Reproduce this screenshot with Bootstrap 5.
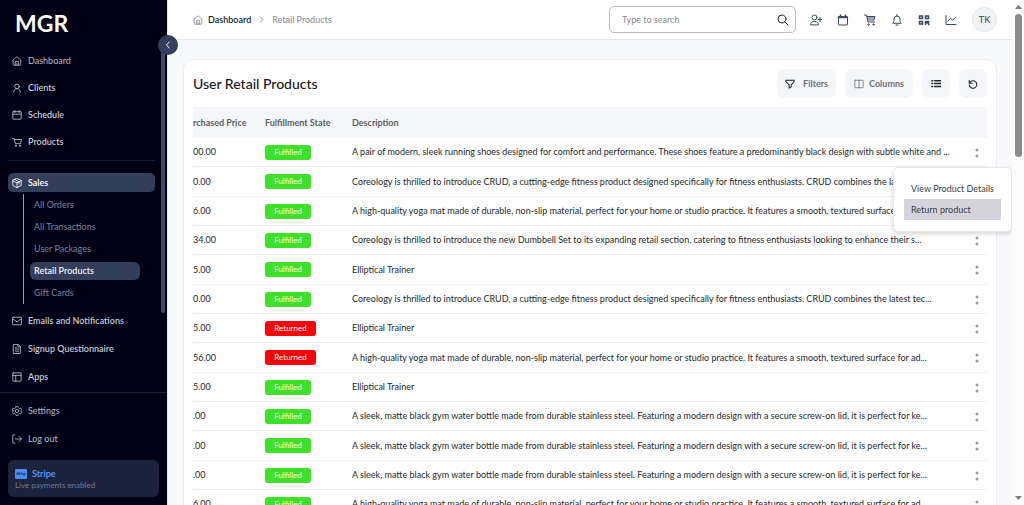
<!DOCTYPE html>
<html lang="en">
<head>
<meta charset="utf-8">
<meta name="viewport" content="width=device-width, initial-scale=1">
<title>MGR – Retail Products</title>
<link href="https://cdn.jsdelivr.net/npm/bootstrap@5.3.0/dist/css/bootstrap.min.css" rel="stylesheet">
<style>
  body { font-family: "Lato", "Noto Sans", sans-serif; font-size: 9px; line-height: 12px; color: #26292e; background: #f8f9fb; }
  a { color: inherit; text-decoration: none; }
  .ico { width: 10px; height: 10px; fill: none; stroke: currentColor; stroke-width: 2; stroke-linecap: round; stroke-linejoin: round; flex: none; }
  .ico-md { width: 12px; height: 12px; }

  /* sidebar */
  .side { width: 168px; background: #020014; color: #c3c8d6; border-right: 1px solid #e3e5ea; z-index: 5; }
  .side-scroll { height: 392px; padding: 0 12px 0 8px; }
  .brand { font-size: 23px; line-height: 28px; font-weight: 700; color: #fff; padding: 9px 0 10px 7px; }
  .side-link { height: 27px; padding-left: 4px; gap: 6px; font-weight: 600; }
  .side-link.regular { font-weight: 400; color: #b4b9c9; }
  .side-rule { height: 1px; background: #1c1e33; margin: 5px 0 12px; }
  .side-open { height: 19px; border-radius: 5px; background: #333e5a; color: #fff; }
  .side-sub { margin: 2px 0 3px 15px; padding: 2px 0; border-left: 1px solid #9b9dab; color: #7b839d; gap: 4px; }
  .side-sub a { display: flex; align-items: center; height: 18px; margin: 0 15px 0 6px; padding-left: 4px; border-radius: 6px; }
  .side-sub a.current { background: #333e5a; color: #eef0f5; font-weight: 600; }
  .side-lower .side-link, .side-foot .side-link { height: 28px; }
  .side-track { top: 52px; right: 2px; width: 4px; height: 261px; background: #3f4a68; border-radius: 2px; }
  .plain { border: 0; background: none; padding: 0; color: inherit; line-height: 0; }
  .side-toggle { top: 35px; right: -11px; width: 20px; height: 20px; border-radius: 50%; background: #333e5a; color: #fff; }
  .side-toggle svg { width: 8px; height: 8px; stroke-width: 3; }
  .side-foot { border-top: 1px solid #20233a; padding: 4px 8px 8px; }
  .pay { background: #1c233d; border-radius: 6px; height: 37px; padding: 8px 7px 0; margin-top: 7px; }
  .pay-name { color: #5b93fb; font-weight: 700; gap: 5px; }
  .pay-logo { width: 12px; height: 10px; }
  .pay-note { font-size: 8px; line-height: 10px; color: #717993; }

  /* top bar */
  .top { height: 40px; background: #fff; border-bottom: 1px solid #e4e6ea; padding: 0 15px 0 25px; }
  .crumbs { gap: 5px; color: #878b95; }
  .crumbs .chevron { margin: 0 2px; width: 7px; height: 7px; stroke-width: 3; }
  .finder { width: 187px; height: 27px; border: 1px solid #b9bec7; border-radius: 5px; padding: 0 6px 0 12px; }
  .finder input { border: 0; outline: 0; background: none; min-width: 0; padding: 0; color: #26292e; }
  .finder input::placeholder { color: #868a92; }
  .tools { gap: 15px; margin-left: 14px; color: #3d4b5c; }
  .avatar { width: 25px; height: 25px; border-radius: 50%; border: 1px solid #e3e6ea; background: #f1f3f5; color: #4b5968; font-weight: 600; padding: 0; }

  /* panel */
  .panel { margin: 19px 15px 0 15px; background: #fff; border: 1px solid #eceef2; border-radius: 10px; padding: 9px 9px 0; }
  .panel-head { gap: 9px; }
  .panel h1 { font-size: 14px; line-height: 20px; font-weight: 500; margin: 0; color: #16181c; }
  .tool { height: 29px; border: 0; border-radius: 7px; background: #f5f6fa; color: #6d7079; font-weight: 700; min-width: 28px; padding: 0 9px; gap: 5px; }
  .tool svg { color: #22252a; }
  .tool.wide { gap: 8px; padding: 0 8px; }
  .grid { width: 100%; margin-top: 9px; table-layout: fixed; border-collapse: separate; border-spacing: 0; white-space: nowrap; }
  .grid th { height: 31px; background: #f5f6fa; color: #5b5e66; font-weight: 700; padding: 0; }
  .grid td { height: 29px; padding: 0; border-bottom: 1px solid #eeeff3; }
  .grid tr:nth-child(3n+2) td { height: 30px; }
  .c-price { width: 72px; } .c-state { width: 87px; } .c-menu { width: 20px; }
  .state { display: inline-block; border-radius: 3px; background: #3fe02a; color: #f2fff0; line-height: 15px; padding: 0 9px; vertical-align: middle; font-size: 8px; min-width: 46px; text-align: center; }
  .state.returned { background: #fb0007; min-width: 51px; }
  .dots { width: 20px; color: #93a0a8; }
  .pop { top: 29px; right: -25px; width: 119px; border: 1px solid #e6e7eb; border-radius: 5px; background: #fff; box-shadow: 0 2px 4px rgba(0,0,0,.16); padding: 10px 10px 11px; z-index: 6; }
  .pop button { display: block; width: 100%; height: 21px; border: 0; background: none; color: #3c3e44; text-align: left; padding: 0 7px; }
  .pop button.hot { background: #d5d4dc; }

  /* page scroll rail */
  .rail { width: 12px; background: #fcfcfc; padding: 4px 0; color: #7c7c7c; }
  .rail-thumb { width: 7px; height: 143px; border-radius: 4px; background: #8b8b8b; margin-top: 5px; }
</style>
</head>
<body>
<svg class="d-none">
  <symbol id="home" viewBox="0 0 24 24"><path d="M3 9 12 2l9 7v12a1 1 0 0 1-1 1H4a1 1 0 0 1-1-1zM8 22v-9h8v9M12 17v5"/></symbol>
  <symbol id="user" viewBox="0 0 24 24"><circle cx="12" cy="8" r="5.500"/><path d="M4 22c0-5 3-8.500 8-8.500s8 3.500 8 8.500"/></symbol>
  <symbol id="cal" viewBox="0 0 24 24"><rect x="2" y="4" width="20" height="18" rx="1"/><path d="M7 1v5M17 1v5M2 10h20"/></symbol>
  <symbol id="cart" viewBox="0 0 24 24"><path d="M1 3h4l3 13h12l3-10H6"/><circle cx="9" cy="21" r="1.500"/><circle cx="19" cy="21" r="1.500"/></symbol>
  <symbol id="trolley" viewBox="0 0 24 24"><path d="M1 2h4l3 14h13M6 5h16l-2 7H8M7 8h14"/><circle cx="9" cy="21" r="1.500"/><circle cx="19" cy="21" r="1.500"/></symbol>
  <symbol id="box" viewBox="0 0 24 24"><path d="m12 1 10 5v12l-10 5-10-5V6zM2 6l10 6 10-6M12 12v11M7 3.500l10 6v5"/></symbol>
  <symbol id="mail" viewBox="0 0 24 24"><rect x="1" y="3" width="22" height="18" rx="2"/><path d="m2 7 10 7 10-7"/></symbol>
  <symbol id="doc" viewBox="0 0 24 24"><path d="M4 1h11l5 5v17H4zM14 1v6h6M8 12h8M8 17h8M8 8h2"/></symbol>
  <symbol id="apps" viewBox="0 0 24 24"><rect x="2" y="2" width="20" height="20" rx="1"/><path d="M2 8h20M9 8v14"/></symbol>
  <symbol id="gear" viewBox="0 0 24 24"><circle cx="12" cy="12" r="4"/><path d="m10 1h4l1 3 3 2 3-1 2 4-2 3 2 3-2 4-3-1-3 2-1 3h-4l-1-3-3-2-3 1-2-4 2-3-2-3 2-4 3 1 3-2z"/></symbol>
  <symbol id="exit" viewBox="0 0 24 24"><path d="M7 2H2v20h5M8 12h15M17 6l6 6-6 6"/></symbol>
  <symbol id="right" viewBox="0 0 24 24"><path d="m8 3 9 9-9 9"/></symbol>
  <symbol id="left" viewBox="0 0 24 24"><path d="m16 3-9 9 9 9"/></symbol>
  <symbol id="search" viewBox="0 0 24 24"><circle cx="10" cy="10" r="8"/><path d="m16 16 6 6"/></symbol>
  <symbol id="useradd" viewBox="0 0 24 24"><circle cx="9" cy="7" r="5"/><path d="M1 21c0-4 3-6 8-6s8 2 8 6zM20 7v8M16 11h8"/></symbol>
  <symbol id="date" viewBox="0 0 24 24"><rect x="3" y="5" width="18" height="17" rx="1"/><path d="M7 2v3M17 2v3M3 7h18" stroke-width="3"/></symbol>
  <symbol id="bell" viewBox="0 0 24 24"><path d="M4 18c2-2 2-4 2-8a6 6 0 0 1 12 0c0 4 0 6 2 8zM10 22h4M12 1v3"/></symbol>
  <symbol id="qr" viewBox="0 0 24 24"><g stroke-width="3" stroke-linejoin="miter"><path d="M3 4h6v5H3zM15 4h6v5h-6zM3 15h6v5H3zM15 21v-6h6v3h-3M21 21h1"/></g></symbol>
  <symbol id="chart" viewBox="0 0 24 24"><path d="M2 3v18h20M6 14l5-5 4 3 6-5"/></symbol>
  <symbol id="funnel" viewBox="0 0 24 24"><path d="M2 3h20v3l-7 8v5l-5 3v-8L2 6z" stroke-width="2.500"/></symbol>
  <symbol id="cols" viewBox="0 0 24 24"><rect x="2" y="3" width="20" height="18" rx="1"/><path d="M12 3v18"/></symbol>
  <symbol id="list" viewBox="0 0 24 24"><path d="M9 4h14M9 11h14M9 18h14M2 4h2M2 11h2M2 18h2" stroke-width="3.500"/></symbol>
  <symbol id="redo" viewBox="0 0 24 24"><path d="M3 3v7h7M4 9a9 9 0 1 1-1 5" stroke-width="2.500"/></symbol>
</svg>

<div class="d-flex vh-100 overflow-hidden">
  <aside class="side position-relative d-flex flex-column flex-shrink-0">
    <nav class="side-scroll">
      <div class="brand">MGR</div>
      <a href="#" class="side-link regular d-flex align-items-center"><svg class="ico"><use href="#home"/></svg>Dashboard</a>
      <a href="#" class="side-link d-flex align-items-center"><svg class="ico"><use href="#user"/></svg>Clients</a>
      <a href="#" class="side-link d-flex align-items-center"><svg class="ico"><use href="#cal"/></svg>Schedule</a>
      <a href="#" class="side-link d-flex align-items-center"><svg class="ico"><use href="#cart"/></svg>Products</a>
      <div class="side-rule"></div>
      <a href="#" class="side-link side-open d-flex align-items-center"><svg class="ico"><use href="#box"/></svg>Sales</a>
      <div class="side-sub d-flex flex-column">
        <a href="#">All Orders</a>
        <a href="#">All Transactions</a>
        <a href="#">User Packages</a>
        <a href="#" class="current">Retail Products</a>
        <a href="#">Gift Cards</a>
      </div>
      <div class="side-lower">
        <a href="#" class="side-link d-flex align-items-center"><svg class="ico"><use href="#mail"/></svg>Emails and Notifications</a>
        <a href="#" class="side-link d-flex align-items-center"><svg class="ico"><use href="#doc"/></svg>Signup Questionnaire</a>
        <a href="#" class="side-link d-flex align-items-center"><svg class="ico"><use href="#apps"/></svg>Apps</a>
      </div>
    </nav>
    <div class="side-foot">
      <a href="#" class="side-link regular d-flex align-items-center"><svg class="ico"><use href="#gear"/></svg>Settings</a>
      <a href="#" class="side-link regular d-flex align-items-center"><svg class="ico"><use href="#exit"/></svg>Log out</a>
      <div class="pay">
        <div class="pay-name d-flex align-items-center">
          <svg class="pay-logo" viewBox="0 0 12 10"><rect width="12" height="10" rx="1" fill="#4d8bfa"/><path d="M1 5h10M2 4h1M4 3v3M6 4h1M9 4v3" stroke="#1c3770" fill="none"/></svg>Stripe
        </div>
        <div class="pay-note">Live payments enabled</div>
      </div>
    </div>
    <div class="side-track position-absolute"></div>
    <button class="plain side-toggle position-absolute d-flex align-items-center justify-content-center" aria-label="Collapse menu"><svg class="ico"><use href="#left"/></svg></button>
  </aside>

  <div class="flex-grow-1 overflow-hidden">
    <header class="top d-flex align-items-center">
      <nav class="crumbs d-flex align-items-center me-auto" aria-label="Breadcrumb">
        <svg class="ico"><use href="#home"/></svg>
        <a href="#" class="fw-semibold text-dark">Dashboard</a>
        <svg class="ico chevron"><use href="#right"/></svg>
        <a href="#">Retail Products</a>
      </nav>
      <form class="finder d-flex align-items-center">
        <input class="flex-grow-1" type="search" placeholder="Type to search" aria-label="Search">
        <button class="plain text-dark" type="button" aria-label="Search"><svg class="ico ico-md"><use href="#search"/></svg></button>
      </form>
      <div class="tools d-flex align-items-center">
        <button class="plain" aria-label="Add user"><svg class="ico ico-md"><use href="#useradd"/></svg></button>
        <button class="plain" aria-label="Calendar"><svg class="ico ico-md"><use href="#date"/></svg></button>
        <button class="plain" aria-label="Cart"><svg class="ico ico-md"><use href="#trolley"/></svg></button>
        <button class="plain" aria-label="Notifications"><svg class="ico ico-md"><use href="#bell"/></svg></button>
        <button class="plain" aria-label="QR code"><svg class="ico ico-md"><use href="#qr"/></svg></button>
        <button class="plain" aria-label="Reports"><svg class="ico ico-md"><use href="#chart"/></svg></button>
        <button class="avatar">TK</button>
      </div>
    </header>

    <main class="panel">
      <div class="panel-head d-flex align-items-center">
        <h1 class="me-auto">User Retail Products</h1>
        <button class="tool wide d-flex align-items-center"><svg class="ico"><use href="#funnel"/></svg>Filters</button>
        <button class="tool d-flex align-items-center"><svg class="ico text-secondary"><use href="#cols"/></svg>Columns</button>
        <button class="tool d-flex align-items-center" aria-label="List view"><svg class="ico"><use href="#list"/></svg></button>
        <button class="tool d-flex align-items-center" aria-label="Refresh"><svg class="ico"><use href="#redo"/></svg></button>
      </div>
      <table class="grid">
        <thead><tr><th class="c-price">rchased Price</th><th class="c-state">Fulfillment State</th><th>Description</th><th class="c-menu"></th></tr></thead>
        <tbody id="rows"></tbody>
      </table>
    </main>
  </div>

  <div class="rail d-flex flex-column align-items-center flex-shrink-0" aria-hidden="true">
    <svg width="7" height="5" viewBox="0 0 7 5"><path d="M0 5 3.500 1 7 5z" fill="currentColor"/></svg>
    <div class="rail-thumb"></div>
    <svg class="mt-auto" width="7" height="5" viewBox="0 0 7 5"><path d="M0 0 3.500 4 7 0z" fill="currentColor"/></svg>
  </div>
</div>

<script>
  const crud = "Coreology is thrilled to introduce CRUD, a cutting-edge fitness product designed specifically for fitness enthusiasts. CRUD combines the latest tec...";
  const yoga = "A high-quality yoga mat made of durable, non-slip material, perfect for your home or studio practice. It features a smooth, textured surface for ad...";
  const bottle = "A sleek, matte black gym water bottle made from durable stainless steel. Featuring a modern design with a secure screw-on lid, it is perfect for ke...";
  const items = [
    ["00.00", 1, "A pair of modern, sleek running shoes designed for comfort and performance. These shoes feature a predominantly black design with subtle white and ..."],
    ["0.00", 1, crud],
    ["6.00", 1, yoga],
    ["34.00", 1, "Coreology is thrilled to introduce the new Dumbbell Set to its expanding retail section, catering to fitness enthusiasts looking to enhance their s..."],
    ["5.00", 1, "Elliptical Trainer"],
    ["0.00", 1, crud],
    ["5.00", 0, "Elliptical Trainer"],
    ["56.00", 0, yoga],
    ["5.00", 1, "Elliptical Trainer"],
    [".00", 1, bottle],
    [".00", 1, bottle],
    [".00", 1, bottle],
    ["6.00", 1, yoga]
  ];
  const menu = '<div class="pop position-absolute"><button>View Product Details</button><button class="hot">Return product</button></div>';
  document.getElementById("rows").innerHTML = items.map(([price, done, text], i) => `
    <tr><td>${price}</td>
    <td><span class="state ${done ? "" : "returned"}">${done ? "Fulfilled" : "Returned"}</span></td>
    <td>${text}</td>
    <td class="position-relative"><button class="plain dots" aria-label="Row actions"><svg width="4" height="10" viewBox="0 0 4 10" fill="currentColor"><circle cx="2" cy="2" r="1.500"/><circle cx="2" cy="8" r="1.500"/></svg></button>${i ? "" : menu}</td></tr>`).join("");
</script>
<script src="https://cdn.jsdelivr.net/npm/bootstrap@5.3.0/dist/js/bootstrap.bundle.min.js"></script>
</body>
</html>
